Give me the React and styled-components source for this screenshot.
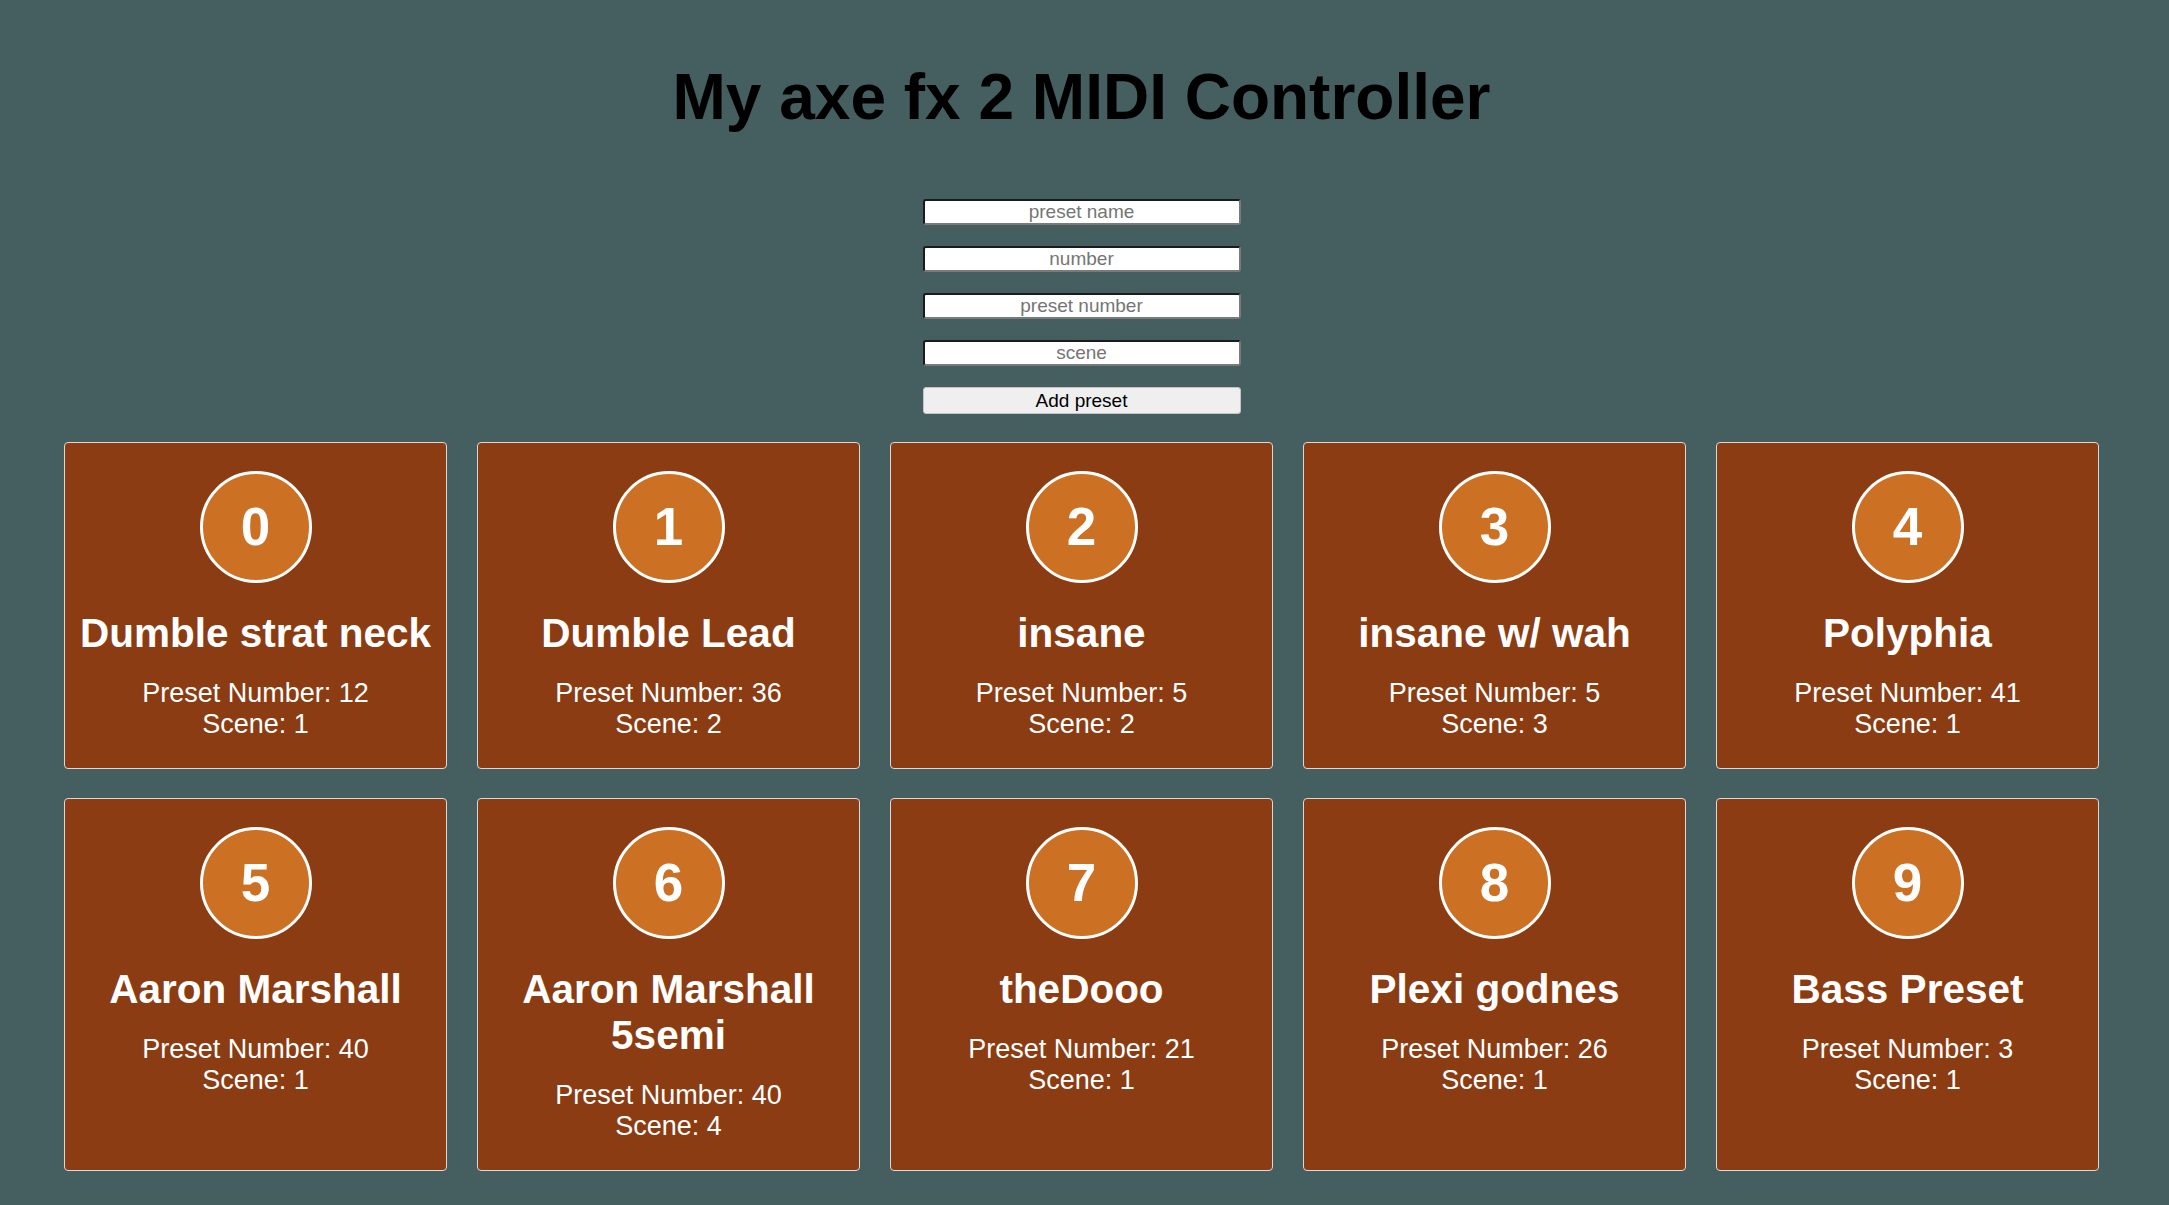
import React from 'react'
import styled, { createGlobalStyle } from 'styled-components'

const presets = [
  { name: 'Dumble strat neck', preset: 12, scene: 1 },
  { name: 'Dumble Lead', preset: 36, scene: 2 },
  { name: 'insane', preset: 5, scene: 2 },
  { name: 'insane w/ wah', preset: 5, scene: 3 },
  { name: 'Polyphia', preset: 41, scene: 1 },
  { name: 'Aaron Marshall', preset: 40, scene: 1 },
  { name: 'Aaron Marshall 5semi', preset: 40, scene: 4 },
  { name: 'theDooo', preset: 21, scene: 1 },
  { name: 'Plexi godnes', preset: 26, scene: 1 },
  { name: 'Bass Preset', preset: 3, scene: 1 },
]

export default function App() {
  return (
    <>
      <GlobalStyle />
      <Page>
        <Title>My axe fx 2 MIDI Controller</Title>
        <Form onSubmit={e => e.preventDefault()}>
          <Field placeholder="preset name" />
          <Field placeholder="number" />
          <Field placeholder="preset number" />
          <Field placeholder="scene" />
          <AddButton type="submit">Add preset</AddButton>
        </Form>
        <Grid>
          {presets.map((p, i) => (
            <Card key={i}>
              <Badge>{i}</Badge>
              <Name>{p.name}</Name>
              <Info>Preset Number: {p.preset}</Info>
              <Info>Scene: {p.scene}</Info>
            </Card>
          ))}
        </Grid>
      </Page>
    </>
  )
}

/** STYLED COMPONENTS */

const GlobalStyle = createGlobalStyle`
  html, body {
    margin: 0;
    padding: 0;
    background-color: #455e5f;
    font-family: 'Liberation Sans', Arial, sans-serif;
  }
`

const Page = styled.div`
  box-sizing: border-box;
  width: calc(100% - 6px);
  min-height: 1205px;
  padding-top: 60px;
  display: flex;
  flex-direction: column;
  align-items: center;
`

const Title = styled.h1`
  margin: 0 0 65px;
  font-size: 64px;
  font-weight: 700;
  color: #000;
  line-height: normal;
`

const Form = styled.form`
  display: flex;
  flex-direction: column;
  gap: 21px;
  width: 318px;
`

const Field = styled.input`
  box-sizing: border-box;
  height: 26px;
  width: 100%;
  padding: 0 4px;
  background: #fff;
  border: 2px solid;
  border-color: #1b1b1b #7a7a7a #7a7a7a #1b1b1b;
  border-radius: 3px;
  font-family: 'Liberation Sans', Arial, sans-serif;
  font-size: 19px;
  text-align: center;
  outline: none;

  &::placeholder {
    color: #757575;
  }
`

const AddButton = styled.button`
  box-sizing: border-box;
  height: 27px;
  width: 100%;
  padding: 0;
  background: #efefef;
  border: 1px solid #c4c4c4;
  border-radius: 3px;
  color: #000;
  font-family: 'Liberation Sans', Arial, sans-serif;
  font-size: 19px;
`

const Grid = styled.div`
  margin-top: 28px;
  display: grid;
  grid-template-columns: repeat(5, 383px);
  column-gap: 30px;
  row-gap: 29px;
`

const Card = styled.div`
  box-sizing: border-box;
  padding: 28px 10px 28px;
  display: flex;
  flex-direction: column;
  align-items: center;
  background-color: #8b3c12;
  border: 1px solid #d9d9d9;
  border-radius: 4px;
  color: #fff;
  text-align: center;
`

const Badge = styled.div`
  box-sizing: border-box;
  width: 112px;
  height: 112px;
  flex-shrink: 0;
  display: flex;
  align-items: center;
  justify-content: center;
  padding-bottom: 2px;
  border: 3px solid #fff;
  border-radius: 50%;
  background-color: #cc7023;
  font-size: 53px;
  font-weight: 700;
`

const Name = styled.h2`
  margin: 27px 0 22px;
  font-size: 40.5px;
  font-weight: 700;
  line-height: 46px;
`

const Info = styled.div`
  font-size: 27px;
  line-height: 31px;
`
